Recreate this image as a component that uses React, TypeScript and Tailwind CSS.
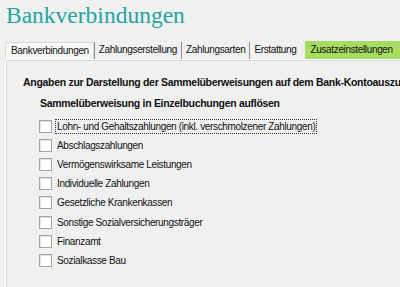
import React from "react";

const tabs = ["Bankverbindungen", "Zahlungserstellung", "Zahlungsarten", "Erstattung"];

const items = [
  "Lohn- und Gehaltszahlungen (inkl. verschmolzener Zahlungen)",
  "Abschlagszahlungen",
  "Vermögenswirksame Leistungen",
  "Individuelle Zahlungen",
  "Gesetzliche Krankenkassen",
  "Sonstige Sozialversicherungsträger",
  "Finanzamt",
  "Sozialkasse Bau",
];

export default function App() {
  return (
    <div className="w-[400px] h-[287px] overflow-hidden bg-[#f0f0f0] text-[10px] tracking-[-0.35px] text-[#111] font-['Liberation_Sans',sans-serif]">
      <h1 className="pl-[6px] pt-[2px] h-[40px] text-[23.5px] tracking-normal leading-[26px] text-[#1ea6a0] font-['Liberation_Serif',serif] whitespace-nowrap">
        Bankverbindungen
      </h1>
      <div className="flex items-end h-[19px] pl-[5px] whitespace-nowrap">
        {tabs.map((t, i) => (
          <div
            key={t}
            className={
              i === 0
                ? "h-[17px] pl-[5px] pr-[4px] leading-[16px] bg-[#f9f9f9] border border-b-0 border-[#d9d9d9]"
                : "h-[17px] px-[4px] leading-[16px] border-l border-[#8c8c8c]"
            }
          >
            {t}
          </div>
        ))}
        <div className="h-[18px] ml-[4px] pl-[6px] pr-[4px] leading-[18px] bg-[#a7dc63] flex-1">Zusatzeinstellungen</div>
      </div>
      <div className="ml-[5px] h-[228px] border-l border-t border-white shadow-[inset_1px_1px_0_#dadada] pl-[17px] pt-[14px]">
        <div className="font-bold text-[10.5px] tracking-[-0.3px] whitespace-nowrap leading-[16px]">
          Angaben zur Darstellung der Sammelüberweisungen auf dem Bank-Kontoauszug
        </div>
        <div className="font-bold text-[10.5px] tracking-[-0.3px] whitespace-nowrap leading-[16px] mt-[5px] pl-[17px]">
          Sammelüberweisung in Einzelbuchungen auflösen
        </div>
        <div className="mt-[6px] pl-[16px] flex flex-col">
          {items.map((t, i) => (
            <div key={t} className="flex items-center h-[19.1px] whitespace-nowrap">
              <span className="w-[13px] h-[13px] border border-[#a3a3a3] bg-white shadow-[inset_1px_1px_0_#e4e4e4] shrink-0" />
              <span
                className={
                  i === 0
                    ? "ml-[3px] px-[1px] border border-dotted border-[#333] leading-[13px]"
                    : "ml-[5px] leading-[13px]"
                }
              >
                {t}
              </span>
            </div>
          ))}
        </div>
      </div>
    </div>
  );
}
